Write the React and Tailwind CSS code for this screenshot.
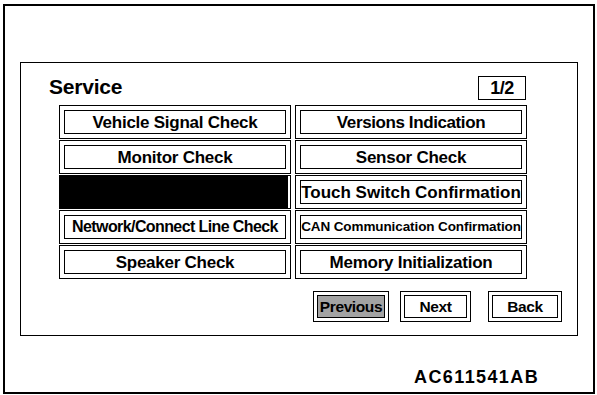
import React from "react";

const D = "text-[17px] tracking-[-0.25px]";
const left = [
  { t: "Vehicle Signal Check", cls: D },
  { t: "Monitor Check", cls: D },
  { t: "", black: true },
  { t: "Network/Connect Line Check", cls: "text-[16px] tracking-[-0.6px]" },
  { t: "Speaker Check", cls: D },
];
const right = [
  { t: "Versions Indication", cls: "text-[17px] tracking-[-0.4px]" },
  { t: "Sensor Check", cls: D },
  { t: "Touch Switch Confirmation", cls: "text-[17px] tracking-[0px]" },
  { t: "CAN Communication Confirmation", cls: "text-[13.5px] tracking-[-0.1px]" },
  { t: "Memory Initialization", cls: D },
];

function Item({ t, black, cls }) {
  if (black) {
    return (
      <div className="h-[34px] border border-black flex">
        <div className="flex-1 bg-black mr-[2px]" />
      </div>
    );
  }
  return (
    <div className="h-[34px] border border-black p-[4px]">
      <div
        className={
          "h-full border border-black flex items-center justify-center whitespace-nowrap font-bold leading-none " +
          cls
        }
      >
        {t}
      </div>
    </div>
  );
}

function Btn({ t, w, gray }) {
  return (
    <div className={"h-[31px] border border-black p-[3px] " + w}>
      <div
        className={
          "h-full border border-black flex items-center justify-center text-[15.5px] font-bold leading-none tracking-[-0.4px] " +
          (gray ? "bg-[#a3a3a3]" : "bg-white")
        }
      >
        {t}
      </div>
    </div>
  );
}

export default function App() {
  const rows = [];
  for (let i = 0; i < 5; i++) {
    rows.push(<Item key={"l" + i} {...left[i]} />);
    rows.push(<Item key={"r" + i} {...right[i]} />);
  }
  return (
    <div className="w-[597px] h-[395px] bg-white pt-[4px] pl-[3px] text-black font-['Liberation_Sans',Arial,sans-serif]">
      <div className="w-[592px] h-[390px] border-2 border-black pt-[56px] pl-[15px] flex flex-col">
        <div className="w-[558px] h-[274px] border border-black pl-[28px] pt-[13px] flex flex-col">
          <div className="w-[477px] h-[24px] flex justify-between items-start">
            <div className="text-[21px] font-bold leading-[23px] tracking-[-0.2px] -mt-[1px]">Service</div>
            <div className="w-[48px] h-[24px] border border-black flex items-center justify-center text-[18px] font-bold leading-none tracking-[-0.5px]">
              1/2
            </div>
          </div>
          <div className="mt-[5px] ml-[10px] grid grid-cols-[232px_232px] gap-x-[4px] gap-y-[1px]">
            {rows}
          </div>
          <div className="mt-[12px] ml-[264px] flex">
            <Btn t="Previous" w="w-[76px]" gray />
            <div className="ml-[11px]">
              <Btn t="Next" w="w-[71px]" />
            </div>
            <div className="ml-[17px]">
              <Btn t="Back" w="w-[74px]" />
            </div>
          </div>
        </div>
        <div className="mt-[31px] ml-[394px] text-[18px] font-bold leading-[21px] tracking-[1.4px]">
          AC611541AB
        </div>
      </div>
    </div>
  );
}
